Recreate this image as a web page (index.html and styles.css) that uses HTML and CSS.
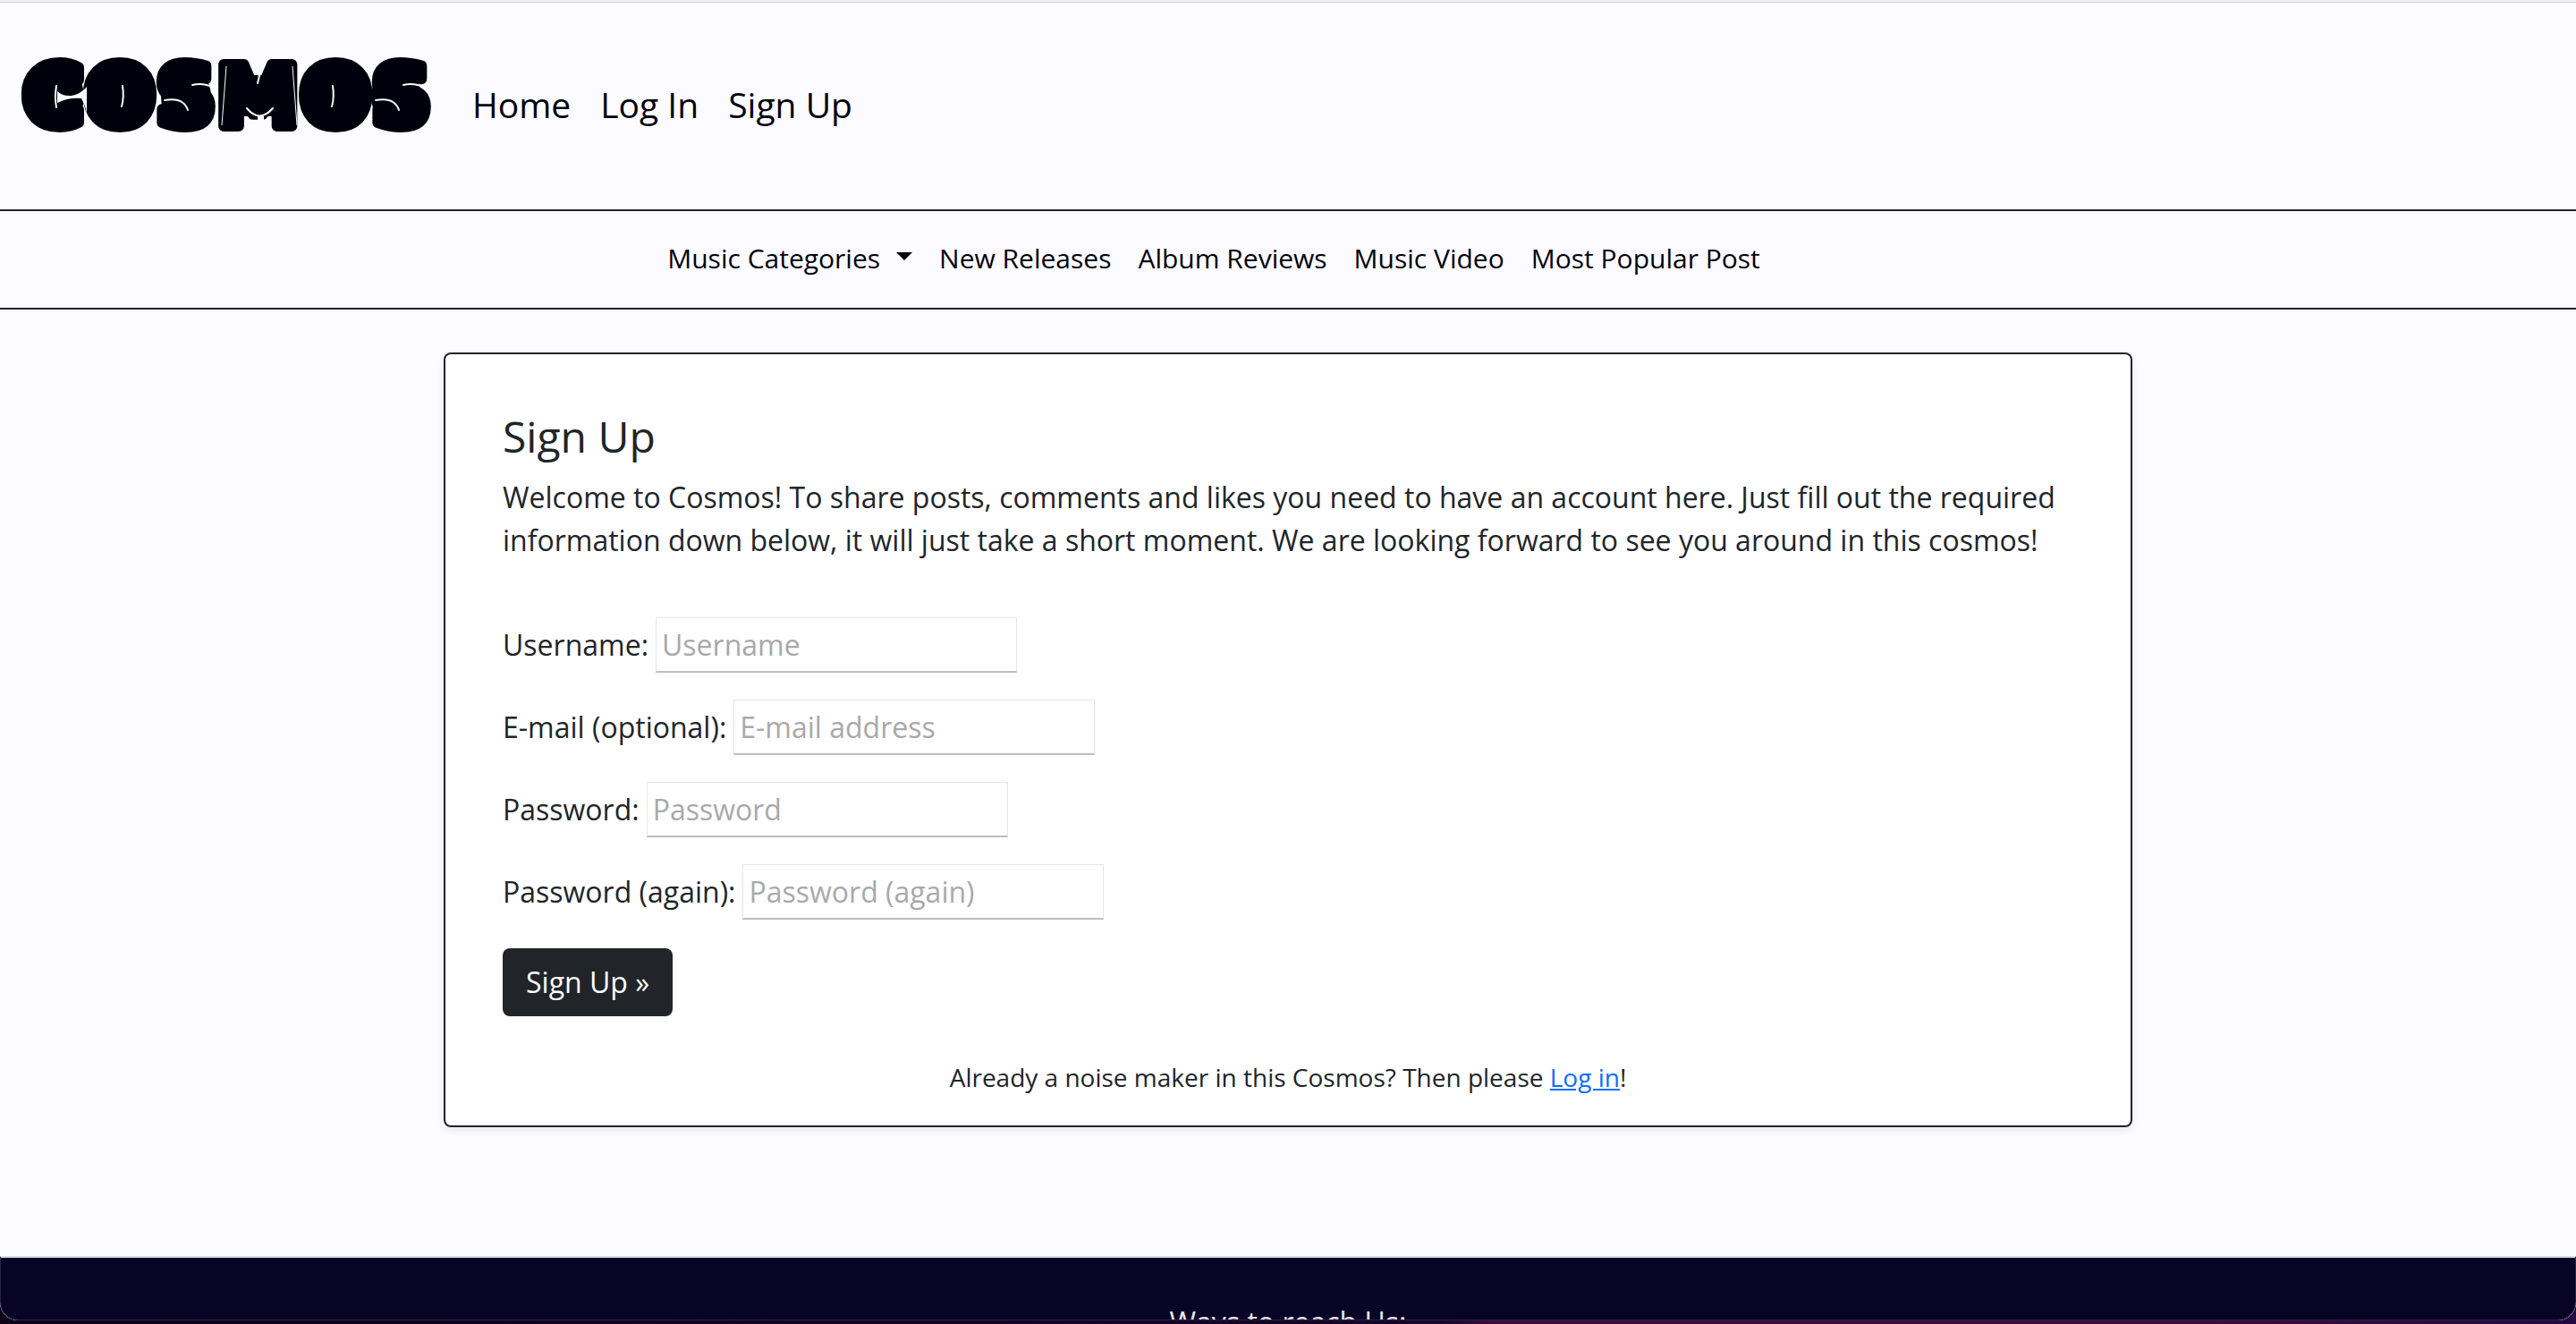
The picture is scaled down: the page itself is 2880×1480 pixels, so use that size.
FILE: index.html
```html
<!DOCTYPE html>
<html lang="en">
<head>
  <meta charset="utf-8">
  <meta name="viewport" content="width=device-width, initial-scale=1">
  <title>Cosmos - Sign Up</title>
  <link rel="stylesheet" href="styles.css">
</head>
<body>
  <div class="window">
    <header class="header">
      <a class="logo" href="#">
        <svg class="logo-art" width="460" height="120" viewBox="0 -16 460 120">
          <g class="logo-fill">
            <ellipse cx="42" cy="44" rx="28" ry="34"/>
            <ellipse cx="113" cy="44" rx="28" ry="34"/>
            <ellipse cx="184" cy="44" rx="28" ry="34"/>
            <rect x="236" y="20" width="60" height="46"/>
            <ellipse cx="348" cy="44" rx="28" ry="34"/>
            <ellipse cx="419" cy="44" rx="28" ry="34"/>
          </g>
          <text class="logo-text" x="1" y="77">COSMOS</text>
          <g class="logo-gaps">
            <path d="M40 38C47 45 62 46 73 33L73 62Q71 53 67 46Q52 45 40 51Z"/>
            <path d="M264 66H271V90H264ZM265 26L264 4H271Z"/>
          </g>
          <g class="logo-lines">
            <path d="M39 32Q37 45 39 56"/>
            <path d="M113 32Q115 45 112 55"/>
            <path d="M191 31Q203 28 215 34M160 48Q181 44 186 59"/>
            <path d="M252 57Q266 74 281 57M264 29L269 8"/>
            <path d="M348 32Q350 45 347 55"/>
            <path d="M427 31Q439 28 451 34M396 48Q417 44 422 59"/>
          </g>
          <path class="logo-seams" d="M229 10L224 76M303 10L308 76"/>
        </svg>
      </a>
      <nav class="main-nav" aria-label="Main">
        <a href="#">Home</a>
        <a href="#">Log In</a>
        <a href="#">Sign Up</a>
      </nav>
    </header>

    <nav class="sub-nav" aria-label="Music">
      <button class="dropdown" type="button" aria-haspopup="true">Music Categories</button>
      <a href="#">New Releases</a>
      <a href="#">Album Reviews</a>
      <a href="#">Music Video</a>
      <a href="#">Most Popular Post</a>
    </nav>

    <main class="content">
      <section class="card">
        <h1 class="card-title">Sign Up</h1>
        <p class="intro">Welcome to Cosmos! To share posts, comments and likes you need to have an account here. Just fill out the required information down below, it will just take a short moment. We are looking forward to see you around in this cosmos!</p>
        <form class="form">
          <div class="field">
            <label for="username">Username:</label>
            <input id="username" type="text" placeholder="Username">
          </div>
          <div class="field">
            <label for="email">E-mail (optional):</label>
            <input id="email" type="email" placeholder="E-mail address">
          </div>
          <div class="field">
            <label for="password1">Password:</label>
            <input id="password1" type="password" placeholder="Password">
          </div>
          <div class="field">
            <label for="password2">Password (again):</label>
            <input id="password2" type="password" placeholder="Password (again)">
          </div>
          <button class="submit" type="submit">Sign Up »</button>
        </form>
        <p class="login-hint">Already a noise maker in this Cosmos? Then please <a href="#">Log in</a>!</p>
      </section>
    </main>

    <footer class="footer">
      <p>Ways to reach Us:</p>
    </footer>
  </div>
</body>
</html>
```
FILE: styles.css
```css
* {
  box-sizing: border-box;
}

body {
  margin: 0;
  height: 100vh;
  padding-bottom: 4px;
  background: linear-gradient(90deg, #0d0218 0, #16042c 56%, #3b0d3c 58%, #3b0d3c 85%, #230740 100%);
  color: #212529;
  font-family: "Open Sans", "Noto Sans", sans-serif;
  font-size: 32px;
  line-height: 48px;
}

h1,
p {
  margin: 0;
}

.window {
  display: flex;
  flex-direction: column;
  height: 100%;
  overflow: hidden;
  border-top: 2px solid #f2f2f5;
  border-radius: 0 0 20px 20px;
  background: #fcfbff;
}

.header {
  display: flex;
  align-items: flex-start;
  gap: 44px;
  flex: none;
  padding: 45px 24px 66px;
  border-top: 1px solid #d5d5da;
  border-bottom: 2px solid #212529;
}

.logo,
.logo-art {
  display: block;
}

.logo-fill {
  fill: #00000c;
}

.logo-text {
  fill: #00000c;
  stroke: #00000c;
  stroke-width: 12px;
  stroke-linejoin: round;
  font: 700 94px "DejaVu Sans", sans-serif;
}

.logo-gaps {
  fill: #fcfbff;
}

.logo-lines {
  fill: none;
  stroke: #fcfbff;
  stroke-width: 2px;
  stroke-linecap: round;
}

.logo-seams {
  fill: none;
  stroke: #fcfbff;
  stroke-width: 1px;
}

.main-nav {
  display: flex;
  gap: 33px;
  padding-top: 45px;
  font-size: 39px;
}

.main-nav a,
.sub-nav a,
.dropdown {
  color: #00000c;
  text-decoration: none;
}

.sub-nav {
  display: flex;
  justify-content: center;
  gap: 30px;
  flex: none;
  padding: 29px 166px 31px 0;
  border-bottom: 2px solid #212529;
  font-size: 30px;
}

.dropdown {
  display: flex;
  align-items: center;
  gap: 18px;
  padding: 0;
  border: 0;
  background: none;
  font: inherit;
}

.dropdown::after {
  content: "";
  margin-bottom: 6px;
  border: 9px solid transparent;
  border-top-color: #00000c;
  border-bottom: 0;
}

.content {
  flex: none;
  padding: 48px 496px 144px;
}

.card {
  padding: 62px 64px 30px;
  border: 2px solid #212529;
  border-radius: 8px;
  background: #fff;
  box-shadow: 0 4px 8px rgba(0, 0, 0, 0.08);
}

.card-title {
  margin-bottom: 14px;
  font-size: 48px;
  font-weight: 400;
  line-height: 60px;
}

.form {
  display: flex;
  flex-direction: column;
  align-items: flex-start;
  gap: 30px;
  margin-top: 62px;
}

.field {
  display: flex;
  align-items: center;
  gap: 8px;
}

.field input {
  width: 404px;
  height: 62px;
  padding: 0 6px;
  border: 1px solid #e6e6e6;
  border-bottom: 2px solid #bdbdbd;
  background: #fff;
  color: #212529;
  font: inherit;
}

.field input::placeholder {
  color: #a9a9a9;
}

.submit {
  margin-top: 2px;
  padding: 14px 26px;
  border: 0;
  border-radius: 8px;
  background: #212529;
  color: #fff;
  font: inherit;
}

.login-hint {
  margin-top: 44px;
  font-size: 28px;
  text-align: center;
}

.login-hint a {
  color: #0d6efd;
}

.footer {
  flex: 1 1 0;
  min-height: 0;
  padding-top: 48px;
  overflow: hidden;
  border: 1px solid #2a2540;
  border-top: 2px solid #d9dde3;
  border-radius: 0 0 20px 20px;
  background: #080425;
  color: #e6e6e6;
  text-align: center;
}
```
